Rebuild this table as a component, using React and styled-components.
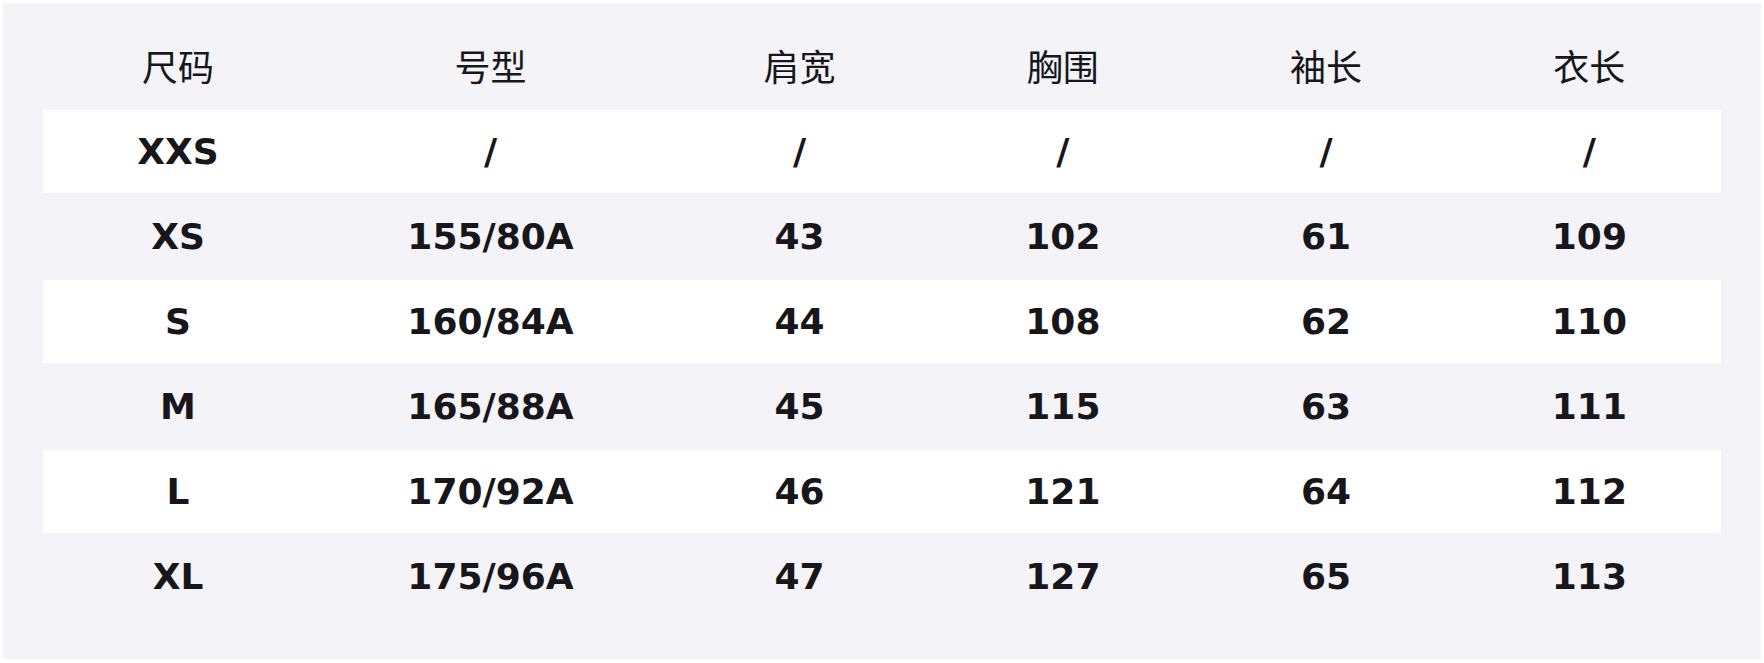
import styled, { createGlobalStyle } from "styled-components";

const GlobalStyle = createGlobalStyle`
  html, body {
    margin: 0;
    padding: 0;
    background: #ffffff;
  }
  body {
    font-family: "DejaVu Sans", "Noto Sans CJK SC", sans-serif;
    color: #16161b;
  }
`;

const columns = ["尺码", "号型", "肩宽", "胸围", "袖长", "衣长"];

const rows = [
  ["XXS", "/", "/", "/", "/", "/"],
  ["XS", "155/80A", "43", "102", "61", "109"],
  ["S", "160/84A", "44", "108", "62", "110"],
  ["M", "165/88A", "45", "115", "63", "111"],
  ["L", "170/92A", "46", "121", "64", "112"],
  ["XL", "175/96A", "47", "127", "65", "113"],
];

const Page = styled.div`
  padding: 3px;
`;

const Panel = styled.section`
  background: #f4f3f8;
  padding: 40px 40px 41px;
  display: flex;
  flex-direction: column;
  gap: 2px;
`;

const Row = styled.div`
  display: grid;
  grid-template-columns: 270px 355px repeat(4, 1fr);
  height: ${(p) => (p.$head ? "65px" : "83px")};
  background: ${(p) => (p.$striped ? "#ffffff" : "transparent")};
  align-items: ${(p) => (p.$head ? "start" : "center")};
`;

const HeadCell = styled.div`
  text-align: center;
  font-family: "Noto Sans CJK SC", "DejaVu Sans", sans-serif;
  font-size: 36px;
  line-height: 36px;
  font-weight: 400;
  padding-top: 4px;
`;

const Cell = styled.div`
  text-align: center;
  font-family: "DejaVu Sans", "Noto Sans CJK SC", sans-serif;
  font-size: 36px;
  line-height: 36px;
  font-weight: 700;
`;

const App = () => {
  return (
    <Page>
      <GlobalStyle />
      <Panel>
        <Row $head>
          {columns.map((c) => (
            <HeadCell key={c}>{c}</HeadCell>
          ))}
        </Row>
        {rows.map((r, i) => (
          <Row key={r[0]} $striped={i % 2 === 0}>
            {r.map((v, j) => (
              <Cell key={j}>{v}</Cell>
            ))}
          </Row>
        ))}
      </Panel>
    </Page>
  );
};

export default App;
